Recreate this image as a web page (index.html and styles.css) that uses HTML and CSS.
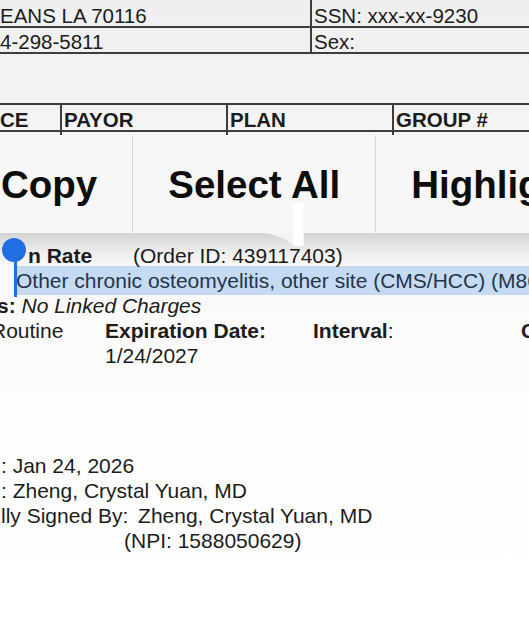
FILE: index.html
```html
<!DOCTYPE html>
<html lang="en">
<head>
    <meta charset="UTF-8">
    <meta name="viewport" content="width=device-width, initial-scale=1.0">
    <title>Order Summary</title>
    <link rel="stylesheet" href="styles.css">
</head>
<body>
    <div class="page">
        <div class="demo">
            <div class="demo-row first">
                <div class="demo-cell">EANS LA 70116</div>
                <div class="demo-cell">SSN: xxx-xx-9230</div>
            </div>
            <div class="demo-row">
                <div class="demo-cell">4-298-5811</div>
                <div class="demo-cell">Sex:</div>
            </div>
        </div>

        <div class="coverage">
            <div class="cov-row head">
                <div class="cov-cell">CE</div>
                <div class="cov-cell">PAYOR</div>
                <div class="cov-cell">PLAN</div>
                <div class="cov-cell">GROUP #</div>
            </div>
            <div class="cov-row blank">
                <div class="cov-cell"></div>
                <div class="cov-cell"></div>
                <div class="cov-cell"></div>
                <div class="cov-cell"></div>
            </div>
        </div>

        <div class="order">
            <div class="order-line">
                <b class="order-name">n Rate</b>
                <span>(Order ID: 439117403)</span>
            </div>
            <div class="selected">Other chronic osteomyelitis, other site (CMS/HCC) (M86.8X8)</div>
            <div class="status"><b>s:</b> <i>No Linked Charges</i></div>
            <div class="order-grid">
                <div><span class="priority">Routine</span></div>
                <div><b>Expiration Date:</b><br>1/24/2027</div>
                <div><b>Interval</b>:</div>
                <div><b>Count:</b></div>
            </div>
        </div>

        <div class="signature">
            <div class="sig-line">: Jan 24, 2026</div>
            <div class="sig-line">: Zheng, Crystal Yuan, MD</div>
            <div class="sig-line">lly Signed By: <span class="signer">Zheng, Crystal Yuan, MD</span></div>
            <div class="sig-line npi">(NPI: 1588050629)</div>
        </div>

        <!-- text selection popup over the document -->
        <div class="menu-glint"></div>
        <div class="menu">
            <div class="menu-item">Copy</div>
            <div class="menu-item">Select All</div>
            <div class="menu-item">Highlight</div>
            <div class="menu-item">Look Up</div>
        </div>
        <div class="menu-shadow"></div>
        <svg class="menu-tail" width="60" height="16" viewBox="0 0 60 16">
            <path d="M6 0 C 20 1, 30 6, 38 13 L 48 13 L 48 0 Z" fill="#f3f3f3"/>
        </svg>
        <div class="handle-dot"></div>
        <div class="handle-stem"></div>
    </div>
</body>
</html>
```

FILE: styles.css
```css
* {
    box-sizing: border-box;
}
html, body {
    height: 100%;
}
body {
    margin: 0;
    overflow: hidden;
    font-family: "Liberation Sans", Arial, sans-serif;
    color: #1c1c1c;
    background: linear-gradient(#efefef, #f5f5f5 150px, #fdfdfd 400px, #fff);
}
.page {
    position: relative;
    height: 620px;
    font-size: 20.5px;
    line-height: 25px;
    white-space: nowrap;
}

/* demographics table */
.demo-row {
    display: grid;
    grid-template-columns: 310px 1fr;
    height: 26px;
    border-bottom: 2px solid #3d3d3d;
}
.demo-row.first {
    height: 28px;
}
.demo-cell {
    padding-top: 1px;
}
.demo-row.first .demo-cell {
    padding-top: 3px;
}
.demo-cell + .demo-cell {
    border-left: 2px solid #3d3d3d;
    padding-left: 2px;
}

/* coverage table */
.coverage {
    margin-top: 49px;
}
.cov-row {
    display: grid;
    grid-template-columns: 60px 166px 166px 1fr;
}
.cov-row.head {
    height: 29px;
    border-top: 2px solid #3d3d3d;
    border-bottom: 2px solid #3d3d3d;
    font-weight: bold;
}
.cov-row.blank {
    height: 40px;
}
.cov-cell {
    padding: 2px 0 0 2px;
}
.cov-row.head .cov-cell:first-child {
    padding-left: 0;
}
.cov-cell + .cov-cell {
    border-left: 2px solid #3d3d3d;
}

/* order details */
.order {
    margin-top: 71px;
    font-size: 21px;
}
.order-line {
    display: grid;
    grid-template-columns: 133px 1fr;
}
.order-name {
    padding-left: 28px;
}
.selected {
    margin: -2px 0 -2px 14px;
    padding-left: 2px;
    line-height: 29px;
    background: #c6daf3;
    color: #23354a;
    overflow: hidden;
}
.status {
    margin-left: -3px;
}
.order-grid {
    display: grid;
    grid-template-columns: 105px 208px 208px 1fr;
}
.priority {
    margin-left: -9px;
}

/* signature block */
.signature {
    margin-top: 85px;
    font-size: 21px;
}
.sig-line {
    padding-left: 1px;
}
.signer {
    margin-left: 4px;
}
.sig-line.npi {
    padding-left: 124px;
}

/* selection popup */
.menu {
    position: absolute;
    top: 135px;
    left: -34px;
    height: 98px;
    display: flex;
    background: #f7f7f7;
    color: #0d0d0d;
}
.menu-item {
    display: flex;
    align-items: center;
    padding: 0 35px;
    font-size: 38.5px;
    font-weight: bold;
}
.menu-item + .menu-item {
    border-left: 1px solid #d8d8d8;
}
.menu-shadow {
    position: absolute;
    top: 233px;
    left: 0;
    right: 0;
    height: 34px;
    background: linear-gradient(rgba(0, 0, 0, 0.15), rgba(0, 0, 0, 0.04) 60%, rgba(0, 0, 0, 0));
}
.menu-tail {
    position: absolute;
    top: 233px;
    left: 256px;
}
.menu-glint {
    position: absolute;
    top: 203px;
    left: 293px;
    width: 10px;
    height: 43px;
    background: #fff;
    z-index: 2;
}
.handle-dot {
    position: absolute;
    top: 238px;
    left: 2px;
    width: 24px;
    height: 24px;
    border-radius: 50%;
    background: #1f6fe3;
}
.handle-stem {
    position: absolute;
    top: 255px;
    left: 14px;
    width: 3px;
    height: 42px;
    background: #1f6fe3;
}
```
